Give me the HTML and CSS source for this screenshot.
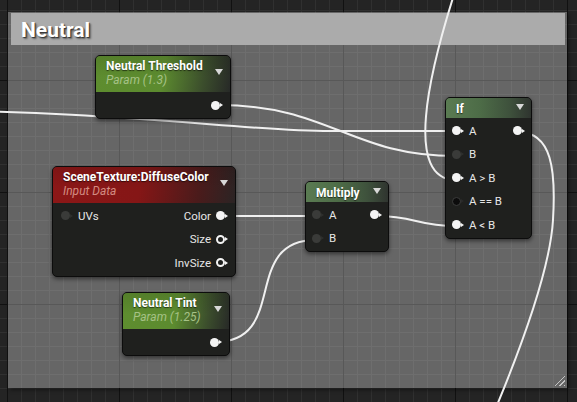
FILE: index.html
```html
<!DOCTYPE html>
<html lang="en">

<head>
    <meta charset="UTF-8">
    <title>Material Graph</title>
    <link rel="stylesheet" href="styles.css">
</head>

<body>
    <div class="graph">
        <div class="comment">
            <div class="comment-head">Neutral</div>
            <div class="grip"></div>
        </div>

        <svg class="wires" width="577" height="402" viewBox="0 0 577 402">
            <path d="M-120,110 C120,110 240,131 330,131 L456,131"/>
            <path d="M218,105 C330,105 350,156 456,156"/>
            <path d="M462,-30 C425,80 405,180 456,180"/>
            <path d="M220,216 L316,216"/>
            <path d="M215,342 C290,342 240,240 316,240"/>
            <path d="M376,216 C416,216 416,226 456,226"/>
            <path d="M518,132 C552,132 556,170 553,220 C550,270 520,350 495,410"/>
        </svg>

        <div class="node param n-threshold">
            <div class="node-head">
                <div class="title">Neutral Threshold</div>
                <div class="sub">Param (1.3)</div>
            </div>
            <div class="pins">
                <div class="row end"><span class="pin"></span></div>
            </div>
        </div>

        <div class="node texture n-scene">
            <div class="node-head">
                <div class="title">SceneTexture:DiffuseColor</div>
                <div class="sub">Input Data</div>
            </div>
            <div class="pins">
                <div class="row">
                    <span class="side"><span class="pin off"></span>UVs</span>
                    <span class="side">Color<span class="pin"></span></span>
                </div>
                <div class="row end"><span class="side">Size<span class="pin ring"></span></span></div>
                <div class="row end"><span class="side">InvSize<span class="pin ring"></span></span></div>
            </div>
        </div>

        <div class="node op n-multiply">
            <div class="node-head">
                <div class="title">Multiply</div>
            </div>
            <div class="pins">
                <div class="row">
                    <span class="side"><span class="pin off"></span>A</span>
                    <span class="pin"></span>
                </div>
                <div class="row"><span class="side"><span class="pin off"></span>B</span></div>
            </div>
        </div>

        <div class="node op n-if">
            <div class="node-head">
                <div class="title">If</div>
            </div>
            <div class="pins">
                <div class="row">
                    <span class="side"><span class="pin"></span>A</span>
                    <span class="pin"></span>
                </div>
                <div class="row"><span class="side"><span class="pin off"></span>B</span></div>
                <div class="row"><span class="side"><span class="pin"></span>A &gt; B</span></div>
                <div class="row"><span class="side"><span class="pin eq"></span>A == B</span></div>
                <div class="row"><span class="side"><span class="pin"></span>A &lt; B</span></div>
            </div>
        </div>

        <div class="node param n-tint">
            <div class="node-head">
                <div class="title">Neutral Tint</div>
                <div class="sub">Param (1.25)</div>
            </div>
            <div class="pins">
                <div class="row end"><span class="pin"></span></div>
            </div>
        </div>
    </div>
</body>

</html>
```

FILE: styles.css
```css
body {
    margin: 0;
    background: #242424;
    font-family: Roboto, "Liberation Sans", sans-serif;
}

.graph {
    position: relative;
    width: 577px;
    height: 402px;
    overflow: hidden;
    background-color: #242424;
    background-image:
        linear-gradient(to right, #111 1px, transparent 1px),
        linear-gradient(to bottom, #111 1px, transparent 1px),
        linear-gradient(to right, #303030 1px, transparent 1px),
        linear-gradient(to bottom, #303030 1px, transparent 1px);
    background-size: 112px 112px, 112px 112px, 14px 14px, 14px 14px;
    background-position: 7px 0, 0 80px, 7px 0, 0 10px;
}

/* comment box */
.comment {
    position: absolute;
    left: 8px;
    top: 12px;
    width: 559px;
    height: 376px;
    background: rgba(255, 255, 255, 0.3);
    box-shadow: 2px 2px 4px rgba(0, 0, 0, 0.45);
}

.comment-head {
    margin: 1px 2px 0 3px;
    height: 32px;
    padding-left: 10px;
    background: #ababab;
    color: #fff;
    font-size: 21px;
    font-weight: bold;
    line-height: 35px;
    text-shadow: 1px 1px 1px #333, 2px 2px 2px rgba(0, 0, 0, 0.4);
}

.grip {
    position: absolute;
    right: 2px;
    bottom: 2px;
    width: 13px;
    height: 13px;
    background: repeating-linear-gradient(135deg, transparent 0 2px, #c4c4c4 2px 3px);
    clip-path: polygon(100% 0, 100% 100%, 0 100%);
}

.wires {
    position: absolute;
    left: 0;
    top: 0;
}

.wires path {
    fill: none;
    stroke: #f0f0f0;
    stroke-width: 2;
}

/* nodes */
.node {
    position: absolute;
    box-sizing: border-box;
    background: #1f201e;
    border: 1px solid #0c0c0c;
    border-radius: 5px;
    box-shadow: 0 2px 4px rgba(0, 0, 0, 0.5);
    color: #e6e6e6;
    font-size: 11.5px;
}

.node-head {
    position: relative;
    box-sizing: border-box;
    height: 36px;
    padding: 3px 0 0 10px;
    border-radius: 4px 4px 0 0;
}

.node-head::after {
    content: '';
    position: absolute;
    right: 7px;
    top: 13px;
    border-top: 6px solid #d8d8d8;
    border-left: 4.5px solid transparent;
    border-right: 4.5px solid transparent;
}

.title {
    color: #fff;
    font-size: 12px;
    font-weight: bold;
    line-height: 14px;
    text-shadow: 0 1px 1px rgba(0, 0, 0, 0.6);
}

.sub {
    font-size: 12px;
    font-style: italic;
    line-height: 15px;
}

.param .node-head {
    background:
        linear-gradient(to bottom, rgba(0, 0, 0, 0.1), rgba(0, 0, 0, 0) 60%),
        linear-gradient(100deg, #5e8d2f 0%, #5c8b2f 50%, #3b4d2c 80%, #272927 100%);
}

.param .sub {
    color: #a6c286;
}

.texture .node-head {
    background:
        linear-gradient(to bottom, rgba(0, 0, 0, 0.1), rgba(0, 0, 0, 0) 60%),
        linear-gradient(100deg, #8c1717 0%, #851616 48%, #4a1b1b 80%, #2b2424 100%);
}

.texture .sub {
    color: #d38c82;
}

.op .node-head {
    height: 20px;
    padding: 4px 0 0 10px;
    background: linear-gradient(to right, #5a7b52 0%, #4d6c47 40%, #3e513c 75%, #2f342f 100%);
}

.op .node-head::after {
    top: 6px;
}

.pins {
    padding: 1px 0 1px;
}

.row {
    display: flex;
    align-items: center;
    justify-content: space-between;
    height: 23.5px;
    padding: 0 7px 0 8px;
}

.row.end {
    justify-content: flex-end;
}

.op .row {
    padding: 0 6px;
}

.n-threshold .row,
.n-tint .row {
    height: 24px;
}

.side {
    display: flex;
    align-items: center;
    gap: 5px;
}

/* pins */
.pin {
    position: relative;
    flex: none;
    box-sizing: border-box;
    width: 9px;
    height: 9px;
    margin-right: 3px;
    border-radius: 50%;
    background: #f4f4f4;
}

.pin::after {
    content: '';
    position: absolute;
    left: 9px;
    top: 2.5px;
    border-left: 3px solid #f4f4f4;
    border-top: 2px solid transparent;
    border-bottom: 2px solid transparent;
}

.pin.off {
    background: #3a3b39;
}

.pin.off::after {
    border-left-color: #2e2f2d;
}

.pin.ring {
    background: #1f201e;
    border: 2px solid #f4f4f4;
}

.pin.ring::after {
    left: 7px;
    top: 0.5px;
}

.pin.eq {
    background: #0c0c0c;
    border: 1px solid #3c3c3c;
}

.pin.eq::after {
    left: 8px;
    top: 1.5px;
    border-left-color: #2a2a2a;
}

/* node placement on the canvas */
.n-threshold {
    left: 95px;
    top: 55px;
    width: 136px;
}

.n-scene {
    left: 52px;
    top: 166px;
    width: 184px;
}

.n-multiply {
    left: 305px;
    top: 181px;
    width: 84px;
}

.n-if {
    left: 445px;
    top: 97px;
    width: 87px;
}

.n-tint {
    left: 122px;
    top: 292px;
    width: 108px;
}
```
